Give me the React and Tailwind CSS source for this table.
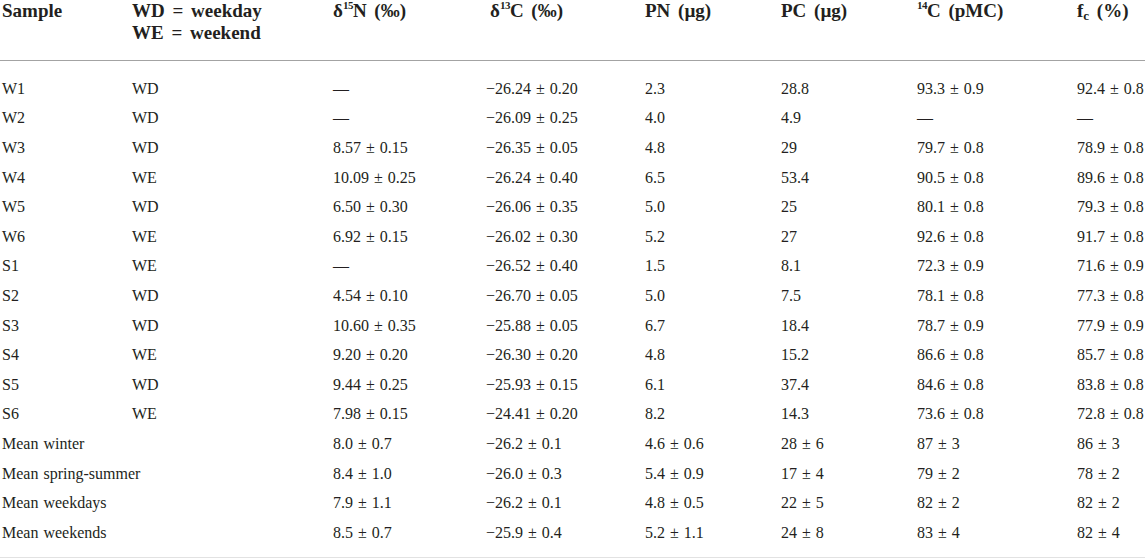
import React from "react";

const rows = [
  ["W1", "WD", "—", "−26.24 ± 0.20", "2.3", "28.8", "93.3 ± 0.9", "92.4 ± 0.8"],
  ["W2", "WD", "—", "−26.09 ± 0.25", "4.0", "4.9", "—", "—"],
  ["W3", "WD", "8.57 ± 0.15", "−26.35 ± 0.05", "4.8", "29", "79.7 ± 0.8", "78.9 ± 0.8"],
  ["W4", "WE", "10.09 ± 0.25", "−26.24 ± 0.40", "6.5", "53.4", "90.5 ± 0.8", "89.6 ± 0.8"],
  ["W5", "WD", "6.50 ± 0.30", "−26.06 ± 0.35", "5.0", "25", "80.1 ± 0.8", "79.3 ± 0.8"],
  ["W6", "WE", "6.92 ± 0.15", "−26.02 ± 0.30", "5.2", "27", "92.6 ± 0.8", "91.7 ± 0.8"],
  ["S1", "WE", "—", "−26.52 ± 0.40", "1.5", "8.1", "72.3 ± 0.9", "71.6 ± 0.9"],
  ["S2", "WD", "4.54 ± 0.10", "−26.70 ± 0.05", "5.0", "7.5", "78.1 ± 0.8", "77.3 ± 0.8"],
  ["S3", "WD", "10.60 ± 0.35", "−25.88 ± 0.05", "6.7", "18.4", "78.7 ± 0.9", "77.9 ± 0.9"],
  ["S4", "WE", "9.20 ± 0.20", "−26.30 ± 0.20", "4.8", "15.2", "86.6 ± 0.8", "85.7 ± 0.8"],
  ["S5", "WD", "9.44 ± 0.25", "−25.93 ± 0.15", "6.1", "37.4", "84.6 ± 0.8", "83.8 ± 0.8"],
  ["S6", "WE", "7.98 ± 0.15", "−24.41 ± 0.20", "8.2", "14.3", "73.6 ± 0.8", "72.8 ± 0.8"],
];

const means = [
  ["Mean winter", "8.0 ± 0.7", "−26.2 ± 0.1", "4.6 ± 0.6", "28 ± 6", "87 ± 3", "86 ± 3"],
  ["Mean spring-summer", "8.4 ± 1.0", "−26.0 ± 0.3", "5.4 ± 0.9", "17 ± 4", "79 ± 2", "78 ± 2"],
  ["Mean weekdays", "7.9 ± 1.1", "−26.2 ± 0.1", "4.8 ± 0.5", "22 ± 5", "82 ± 2", "82 ± 2"],
  ["Mean weekends", "8.5 ± 0.7", "−25.9 ± 0.4", "5.2 ± 1.1", "24 ± 8", "83 ± 4", "82 ± 4"],
];

const cols =
  "grid grid-cols-[130px_201px_153px_159px_136px_136px_160px_1fr] pl-[2px]";

const Sup = ({ children }) => (
  <sup className="text-[11px] top-[-0.75em] tracking-[-0.5px]">{children}</sup>
);

export default function App() {
  return (
    <div
      className="w-[1145px] h-[559px] bg-white text-[#231f20] overflow-hidden"
      style={{ fontFamily: '"Liberation Serif", "Times New Roman", serif' }}
    >
      <div className={`${cols} h-[61px] text-[19px] font-bold leading-[22px] [word-spacing:3px] border-b border-[#a3a3a3]`}>
        <div>Sample</div>
        <div>
          <div>WD = weekday</div>
          <div>WE = weekend</div>
        </div>
        <div>
          δ<Sup>15</Sup>N (‰)
        </div>
        <div className="pl-[4px]">
          δ<Sup>13</Sup>C (‰)
        </div>
        <div>PN (µg)</div>
        <div>PC (µg)</div>
        <div>
          <Sup>14</Sup>C (pMC)
        </div>
        <div>
          f<sub className="text-[13px] bottom-[-0.2em]">c</sub> (%)
        </div>
      </div>

      <div className="pt-[13px] pb-[9px] border-b border-[#e2e2e2] text-[16px] [word-spacing:1px]">
        {rows.map((r) => (
          <div key={r[0]} className={`${cols} h-[29.6px] items-center`}>
            {r.map((c, i) => (
              <div key={i} className="whitespace-nowrap">
                {c}
              </div>
            ))}
          </div>
        ))}
        {means.map((r) => (
          <div key={r[0]} className={`${cols} h-[29.6px] items-center`}>
            <div className="col-span-2 whitespace-nowrap">{r[0]}</div>
            {r.slice(1).map((c, i) => (
              <div key={i} className="whitespace-nowrap">
                {c}
              </div>
            ))}
          </div>
        ))}
      </div>
    </div>
  );
}
